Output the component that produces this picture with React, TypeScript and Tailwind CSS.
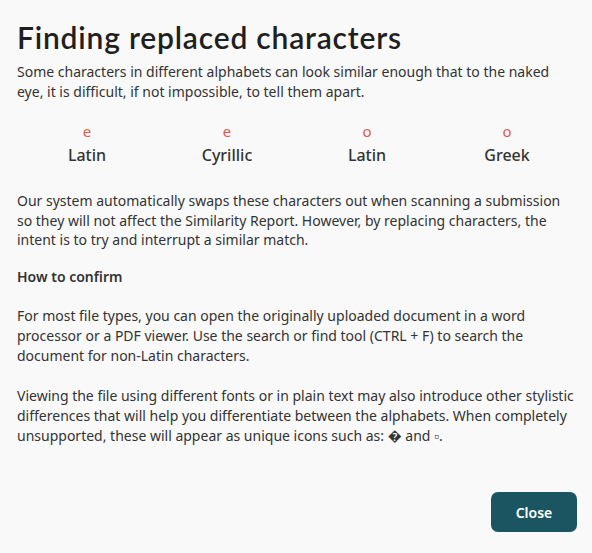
import React from "react";

const chars = [
  { c: "e", label: "Latin" },
  { c: "е", label: "Cyrillic" },
  { c: "o", label: "Latin" },
  { c: "ο", label: "Greek" },
];

export default function App() {
  return (
    <div
      className="w-[592px] h-[553px] bg-[#f9f9f9] text-[#333333] pl-[17px] pr-[15px] pt-[16px] flex flex-col"
      style={{ fontFamily: '"Noto Sans", sans-serif' }}
    >
      <h1
        className="text-[30px] leading-[42px] font-semibold text-[#1f1f1f] tracking-[0.8px]"
        style={{ fontFamily: 'Lato, "Noto Sans", sans-serif' }}
      >
        Finding replaced characters
      </h1>
      <p className="mt-[4px] text-[14px] leading-[20px]">
        Some characters in different alphabets can look similar enough that to the naked eye, it is difficult, if not impossible, to tell them apart.
      </p>
      <div className="grid grid-cols-4 w-[560px] mt-[19px]">
        {chars.map((x, i) => (
          <div key={i} className="flex flex-col items-center">
            <span className="text-[15px] leading-[20px] text-[#e0594f]">{x.c}</span>
            <span className="mt-[2px] text-[16px] leading-[24px] font-medium text-[#333333]">{x.label}</span>
          </div>
        ))}
      </div>
      <p className="mt-[24px] text-[14px] leading-[19.5px]">
        Our system automatically swaps these characters out when scanning a submission so they will not affect the Similarity Report. However, by replacing characters, the intent is to try and interrupt a similar match.
      </p>
      <p className="mt-[17px] text-[14px] leading-[20px] font-semibold">How to confirm</p>
      <p className="mt-[19px] text-[14px] leading-[20px]">
        For most file types, you can open the originally uploaded document in a word processor or a PDF viewer. Use the search or find tool (CTRL + F) to search the document for non-Latin characters.
      </p>
      <p className="mt-[20px] text-[14px] leading-[20px]">
        Viewing the file using different fonts or in plain text may also introduce other stylistic differences that will help you differentiate between the alphabets. When completely unsupported, these will appear as unique icons such as: � and ▫.
      </p>
      <div className="mt-auto mb-[21px] flex justify-end">
        <button className="w-[86px] h-[40px] rounded-[7px] bg-[#1b5562] text-white text-[14px] font-semibold">
          Close
        </button>
      </div>
    </div>
  );
}
